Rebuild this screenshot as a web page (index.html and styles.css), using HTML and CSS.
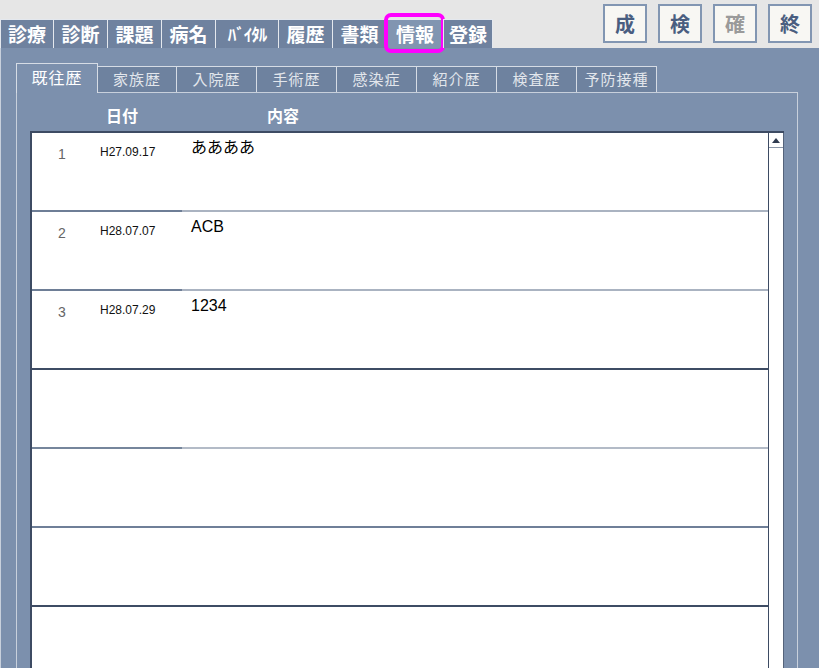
FILE: index.html
```html
<!DOCTYPE html>
<html lang="ja">
<head>
<meta charset="utf-8">
<title>情報</title>
<link rel="stylesheet" href="styles.css">
</head>
<body>
<header class="topbar">
  <nav class="maintabs">
    <div class="mtab w53">診療</div>
    <div class="mtab w54">診断</div>
    <div class="mtab w54">課題</div>
    <div class="mtab w54">病名</div>
    <div class="mtab w63 hw">ﾊﾞｲﾀﾙ</div>
    <div class="mtab w54">履歴</div>
    <div class="mtab w54">書類</div>
    <div class="mtab w57 active">情報<span class="mark"></span></div>
    <div class="mtab w50 last">登録</div>
  </nav>
  <div class="tools">
    <button class="tool">成</button>
    <button class="tool">検</button>
    <button class="tool disabled">確</button>
    <button class="tool">終</button>
  </div>
</header>
<main class="main">
  <div class="subtabs">
    <div class="stab current">既往歴</div>
    <div class="stab first">家族歴</div>
    <div class="stab">入院歴</div>
    <div class="stab">手術歴</div>
    <div class="stab">感染症</div>
    <div class="stab">紹介歴</div>
    <div class="stab">検査歴</div>
    <div class="stab">予防接種</div>
  </div>
  <section class="panel">
    <div class="colhead">
      <span class="h-date">日付</span>
      <span class="h-content">内容</span>
    </div>
    <div class="list">
      <div class="rows">
        <div class="row sep-a"><div class="lead"><span class="num">1</span><span class="date">H27.09.17</span></div><div class="content">ああああ</div></div>
        <div class="row sep-a"><div class="lead"><span class="num">2</span><span class="date">H28.07.07</span></div><div class="content">ACB</div></div>
        <div class="row sep-b"><div class="lead"><span class="num">3</span><span class="date">H28.07.29</span></div><div class="content">1234</div></div>
        <div class="row sep-c"><div class="lead"></div><div class="content"></div></div>
        <div class="row sep-d"><div class="lead"></div><div class="content"></div></div>
        <div class="row sep-b"><div class="lead"></div><div class="content"></div></div>
        <div class="row sep-a"><div class="lead"></div><div class="content"></div></div>
      </div>
      <div class="scrollbar">
        <div class="sb-up"><span class="tri"></span></div>
      </div>
    </div>
  </section>
</main>
</body>
</html>
```
FILE: styles.css
```css
* { box-sizing: border-box; }
html, body {
  margin: 0;
  padding: 0;
}
body {
  width: 819px;
  height: 668px;
  overflow: hidden;
  background: #e6e6e6;
  font-family: "Noto Sans CJK JP", "Liberation Sans", sans-serif;
}

/* top bar */
.topbar {
  height: 48px;
  display: flex;
  justify-content: space-between;
}
.maintabs {
  display: flex;
  align-self: flex-end;
  height: 29px;
}
.mtab {
  position: relative;
  height: 29px;
  background: #6f829f;
  border-left: 1px solid #e4e8ee;
  border-top: 1px solid #e4e8ee;
  color: #ffffff;
  font-size: 19px;
  font-weight: 700;
  line-height: 27px;
  text-align: center;
}
.mtab.last { border-right: 1px solid #e4e8ee; }
.mtab.hw { font-size: 17px; letter-spacing: -1px; }
.mtab.active { background: #8195b1; }
.w50 { width: 50px; }
.w53 { width: 53px; }
.w54 { width: 54px; }
.w57 { width: 57px; }
.w63 { width: 63px; }
.mark {
  position: absolute;
  left: -3px;
  top: -7px;
  width: 61px;
  height: 40px;
  border: 4px solid #ff00ff;
  border-radius: 7px;
}
.tools {
  display: flex;
  gap: 11px;
  padding-top: 4px;
  padding-right: 7px;
  align-self: flex-start;
}
.tool {
  width: 44px;
  height: 39px;
  padding: 0;
  margin: 0;
  background: #f8f7f3;
  border: 2px solid #8296b2;
  color: #4a5e80;
  font-family: "Noto Sans CJK JP", sans-serif;
  font-size: 20px;
  font-weight: 700;
  line-height: 33px;
}
.tool.disabled { color: #9a9a9a; }

/* main area */
.main {
  height: 620px;
  background: #7c90ad;
  border-left: 1px solid #c8d0dc;
  padding: 15px 21px 0 15px;
}
.subtabs {
  display: flex;
  align-items: flex-end;
  height: 29px;
}
.stab {
  width: 80px;
  height: 26px;
  background: #6e829f;
  border-top: 1px solid #d6dce5;
  border-right: 1px solid #d6dce5;
  color: #e2e6ec;
  font-size: 15px;
  line-height: 24px;
  text-align: center;
  letter-spacing: 1px;
}
.stab.first { width: 79px; }
.stab.current {
  position: relative;
  z-index: 1;
  width: 82px;
  height: 30px;
  margin-bottom: -1px;
  background: #7c90ad;
  border-left: 1px solid #d6dce5;
  color: #ffffff;
  font-size: 16px;
  line-height: 26px;
}
.panel {
  height: 600px;
  border: 1px solid #c8d0dc;
  padding: 0 13px;
}
.colhead {
  height: 38px;
  display: flex;
  align-items: center;
  padding-top: 5px;
  color: #ffffff;
  font-size: 16px;
  font-weight: 700;
}
.h-date { margin-left: 76px; width: 161px; }

/* list */
.list {
  display: flex;
  height: 560px;
  background: #ffffff;
  border-top: 2px solid #3d4b63;
  border-left: 2px solid #3d4b63;
}
.rows {
  flex: 1;
}
.row {
  display: flex;
  height: 79px;
}
.lead {
  width: 150px;
  display: flex;
  border-bottom: 2px solid #6e7e96;
}
.content {
  flex: 1;
  padding: 5px 0 0 9px;
  font-family: "Liberation Sans", "Noto Sans CJK JP", sans-serif;
  font-size: 16px;
  line-height: 20px;
  color: #000000;
  border-bottom: 2px solid #aab3c1;
}
.num {
  width: 60px;
  padding-top: 13px;
  text-align: center;
  font-family: "Liberation Sans", sans-serif;
  font-size: 14px;
  line-height: 16px;
  color: #666666;
}
.date {
  padding: 12px 0 0 8px;
  font-family: "Liberation Sans", sans-serif;
  font-size: 12px;
  line-height: 14px;
  color: #111111;
}
.sep-b .lead, .sep-b .content { border-bottom: 2px solid #3e4c64; }
.sep-c .lead { border-bottom-color: #76869c; }
.sep-c .content { border-bottom-color: #b3bbc7; }
.sep-d .lead, .sep-d .content { border-bottom: 2px solid #6f7f98; }

.scrollbar {
  width: 16px;
  border-left: 1px solid #3d4b63;
  border-right: 1px solid #55637a;
  background: #ffffff;
}
.sb-up {
  height: 15px;
  border-bottom: 1px solid #8a96a8;
  display: flex;
  align-items: center;
  justify-content: center;
}
.tri {
  width: 0;
  height: 0;
  border-left: 4px solid transparent;
  border-right: 4px solid transparent;
  border-bottom: 5px solid #2f3b50;
}
```
